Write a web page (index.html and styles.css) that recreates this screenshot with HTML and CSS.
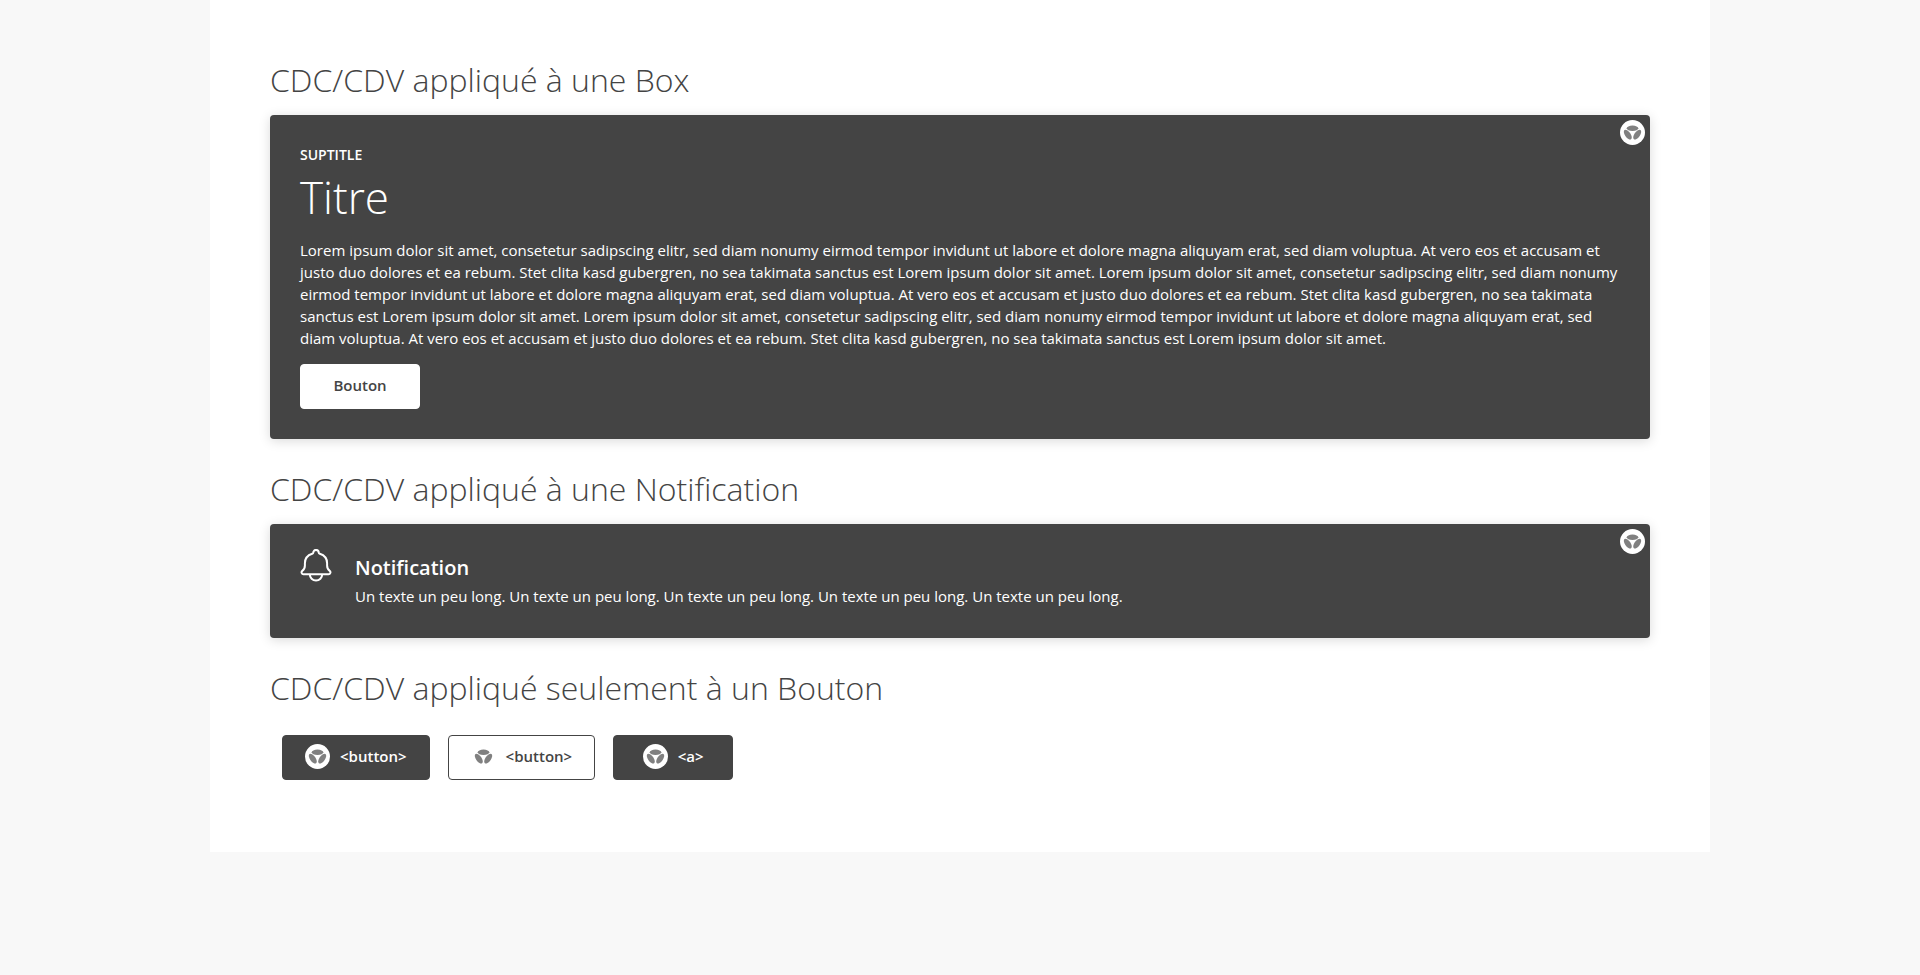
FILE: index.html
```html
<!DOCTYPE html>
<html lang="fr">
<head>
<meta charset="utf-8">
<meta name="viewport" content="width=device-width, initial-scale=1">
<title>CDC/CDV</title>
<link rel="stylesheet" href="styles.css">
</head>
<body>
<svg class="sprite" aria-hidden="true">
  <symbol id="tri" viewBox="0 0 25 25">
    <ellipse cx="12.500" cy="8.300" rx="5.800" ry="2.700"/>
    <ellipse cx="7.800" cy="14.600" rx="5.700" ry="2.800" transform="rotate(55 7.800 14.600)"/>
    <ellipse cx="17.200" cy="14.600" rx="5.700" ry="2.800" transform="rotate(-55 17.200 14.600)"/>
  </symbol>
</svg>
<main class="container">
  <h2 class="heading">CDC/CDV appliqué à une Box</h2>
  <section class="box">
    <span class="badge box-badge"><svg class="tri"><use href="#tri"/></svg></span>
    <p class="suptitle">SUPTITLE</p>
    <h3 class="title">Titre</h3>
    <p class="text box-text">Lorem ipsum dolor sit amet, consetetur sadipscing elitr, sed diam nonumy eirmod tempor invidunt ut labore et dolore magna aliquyam erat, sed diam voluptua. At vero eos et accusam et justo duo dolores et ea rebum. Stet clita kasd gubergren, no sea takimata sanctus est Lorem ipsum dolor sit amet. Lorem ipsum dolor sit amet, consetetur sadipscing elitr, sed diam nonumy eirmod tempor invidunt ut labore et dolore magna aliquyam erat, sed diam voluptua. At vero eos et accusam et justo duo dolores et ea rebum. Stet clita kasd gubergren, no sea takimata sanctus est Lorem ipsum dolor sit amet. Lorem ipsum dolor sit amet, consetetur sadipscing elitr, sed diam nonumy eirmod tempor invidunt ut labore et dolore magna aliquyam erat, sed diam voluptua. At vero eos et accusam et justo duo dolores et ea rebum. Stet clita kasd gubergren, no sea takimata sanctus est Lorem ipsum dolor sit amet.</p>
    <button type="button" class="button inverted">Bouton</button>
  </section>

  <h2 class="heading">CDC/CDV appliqué à une Notification</h2>
  <section class="box notification">
    <span class="badge box-badge"><svg class="tri"><use href="#tri"/></svg></span>
    <svg class="bell" viewBox="0 0 32 34" aria-hidden="true">
      <path d="M3.500 25.300h25a1.900 1.900 0 0 0 1.200-3.400c-1.800-1.300-2.600-2.700-2.600-5.400v-2.300c0-4.600-3-8-7.300-9.400-.7-.2-1-.6-1.100-1.200a2.700 2.700 0 0 0-5.400 0c-.1.600-.4 1-1.100 1.200-4.300 1.400-7.300 4.800-7.300 9.400v2.300c0 2.700-.8 4.100-2.600 5.400a1.900 1.900 0 0 0 1.200 3.400z"/>
      <path d="M9.800 25.300a6.200 6.200 0 0 0 12.400 0"/>
    </svg>
    <div>
      <h3 class="notification-title">Notification</h3>
      <p class="text">Un texte un peu long. Un texte un peu long. Un texte un peu long. Un texte un peu long. Un texte un peu long.</p>
    </div>
  </section>

  <h2 class="heading">CDC/CDV appliqué seulement à un Bouton</h2>
  <div class="buttons">
    <button type="button" class="button"><span class="badge"><svg class="tri"><use href="#tri"/></svg></span>&lt;button&gt;</button>
    <button type="button" class="button outlined"><span class="badge"><svg class="tri"><use href="#tri"/></svg></span>&lt;button&gt;</button>
    <a href="#" class="button"><span class="badge"><svg class="tri"><use href="#tri"/></svg></span>&lt;a&gt;</a>
  </div>
</main>
</body>
</html>
```
FILE: styles.css
```css
* {
  box-sizing: border-box;
}

body {
  margin: 0;
  background: #f8f8f8;
  color: #444;
  font-family: "Open Sans", "Noto Sans", sans-serif;
  font-size: 15px;
  line-height: 22px;
}

h2,
h3,
p {
  margin: 0;
}

.sprite {
  position: absolute;
  width: 0;
  height: 0;
}

.container {
  max-width: 1500px;
  margin: 0 auto;
  padding: 60px;
  background: #fff;
}

.heading {
  margin-bottom: 15px;
  font-size: 32px;
  font-weight: 300;
  line-height: 40px;
}

.box {
  position: relative;
  margin-bottom: 30px;
  padding: 30px;
  border-radius: 4px;
  background: #444;
  box-shadow: 0 2px 12px rgba(0, 0, 0, 0.15);
  color: #fff;
}

.badge {
  display: flex;
  flex: none;
  width: 25px;
  height: 25px;
  border-radius: 50%;
  background: #fff;
}

.box-badge {
  position: absolute;
  top: 5px;
  right: 5px;
}

.tri {
  width: 25px;
  height: 25px;
  fill: #808080;
}

.suptitle {
  margin-bottom: 6px;
  font-size: 14px;
  font-weight: 600;
  line-height: 20px;
}

.title {
  margin-bottom: 16px;
  font-size: 44px;
  font-weight: 300;
  line-height: 52px;
}

.box-text {
  margin-bottom: 15px;
}

.button {
  display: inline-flex;
  align-items: center;
  justify-content: center;
  gap: 10px;
  min-width: 120px;
  height: 45px;
  padding: 0 22px 3px;
  border: 1px solid #444;
  border-radius: 4px;
  background: #444;
  color: #fff;
  font-family: inherit;
  font-size: 15px;
  font-weight: 600;
  line-height: 22px;
  text-decoration: none;
  cursor: pointer;
}

.inverted {
  display: flex;
  border-color: #fff;
  background: #fff;
  color: #444;
}

.outlined {
  background: #fff;
  color: #444;
}

.notification {
  display: flex;
  gap: 23px;
  padding-bottom: 31px;
}

.bell {
  flex: none;
  width: 32px;
  height: 34px;
  margin-top: -5px;
  fill: none;
  stroke: #fff;
  stroke-width: 2;
  stroke-linejoin: round;
}

.notification-title {
  margin-bottom: 3px;
  font-size: 20px;
  font-weight: 600;
  line-height: 28px;
}

.buttons {
  display: flex;
  flex-wrap: wrap;
  gap: 18px;
  padding: 12px;
}
```
